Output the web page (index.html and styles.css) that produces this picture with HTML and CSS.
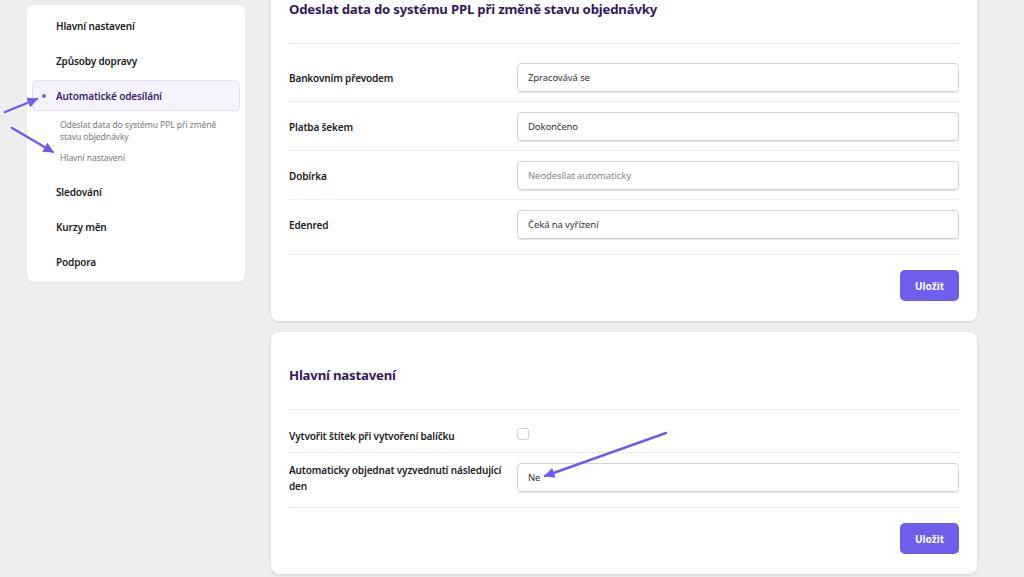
FILE: index.html
```html
<!DOCTYPE html>
<html lang="cs">
<head>
<meta charset="utf-8">
<title>PPL nastavení</title>
<link rel="stylesheet" href="styles.css">
</head>
<body>
<div class="page">
  <nav class="sidebar">
    <div class="nav-item">Hlavní nastavení</div>
    <div class="nav-item">Způsoby dopravy</div>
    <div class="nav-item active"><span class="dot"></span>Automatické odesílání</div>
    <div class="sub-list">
      <div class="sub-item">Odeslat data do systému PPL při změně stavu objednávky</div>
      <div class="sub-item">Hlavní nastavení</div>
    </div>
    <div class="nav-item">Sledování</div>
    <div class="nav-item">Kurzy měn</div>
    <div class="nav-item">Podpora</div>
  </nav>
  <main class="main">
    <section class="card">
      <header class="card-head"><h2>Odeslat data do systému PPL při změně stavu objednávky</h2></header>
      <div class="card-body">
        <div class="row"><div class="label">Bankovním převodem</div><div class="field"><div class="input">Zpracovává se</div></div></div>
        <div class="row"><div class="label">Platba šekem</div><div class="field"><div class="input">Dokončeno</div></div></div>
        <div class="row"><div class="label">Dobírka</div><div class="field"><div class="input placeholder">Neodesílat automaticky</div></div></div>
        <div class="row"><div class="label">Edenred</div><div class="field"><div class="input">Čeká na vyřízení</div></div></div>
      </div>
      <footer class="card-foot"><button class="btn">Uložit</button></footer>
    </section>
    <section class="card">
      <header class="card-head"><h2>Hlavní nastavení</h2></header>
      <div class="card-body">
        <div class="row row-check"><div class="label">Vytvořit štítek při vytvoření balíčku</div><div class="field"><span class="checkbox"></span></div></div>
        <div class="row"><div class="label">Automaticky objednat vyzvednutí následující den</div><div class="field"><div class="input">Ne</div></div></div>
      </div>
      <footer class="card-foot"><button class="btn">Uložit</button></footer>
    </section>
  </main>
</div>
<svg class="arrows" width="1024" height="577" viewBox="0 0 1024 577">
  <defs>
    <marker id="head" viewBox="0 0 10 10" refX="9" refY="5" markerWidth="4.4" markerHeight="4.4" orient="auto" markerUnits="strokeWidth">
      <path d="M0 0 L10 5 L0 10 Z" fill="#6e5cf2"/>
    </marker>
  </defs>
  <g stroke="#6e5cf2" stroke-width="2.4" stroke-linecap="round" fill="none" marker-end="url(#head)">
    <line x1="5" y1="112" x2="37" y2="99"/>
    <line x1="12" y1="128" x2="53" y2="152"/>
    <line x1="666" y1="433" x2="545" y2="476"/>
  </g>
</svg>
</body>
</html>
```

FILE: styles.css
```css
* { box-sizing: border-box; }
html, body { margin: 0; padding: 0; }
body {
  background: #eeeeee;
  font-family: "Noto Sans", "Liberation Sans", sans-serif;
  color: #222;
  width: 1024px;
  height: 577px;
  overflow: hidden;
  position: relative;
}
.page {
  display: flex;
  align-items: flex-start;
  gap: 26px;
  padding-left: 27px;
}
.sidebar {
  width: 218px;
  margin-top: 5px;
  background: #fff;
  border-radius: 6px;
  box-shadow: 0 1px 2px rgba(0,0,0,0.06);
  padding: 3px 0 3px;
  display: flex;
  flex-direction: column;
}
.nav-item {
  height: 31px;
  margin: 2px 5px;
  padding-left: 23px;
  display: flex;
  align-items: center;
  font-size: 10px;
  letter-spacing: -0.15px;
  font-weight: 600;
  color: #222;
  border: 1px solid transparent;
  border-radius: 5px;
  position: relative;
}
.nav-item.active {
  background: #f6f2ff;
  border-color: #e6ddfb;
  color: #3d1f70;
}
.dot {
  position: absolute;
  left: 9px;
  top: 13px;
  width: 4px;
  height: 4px;
  border-radius: 50%;
  background: #7a62ea;
}
.sub-list {
  padding: 6px 10px 10px 33px;
  display: flex;
  flex-direction: column;
  gap: 9px;
}
.sub-item {
  font-size: 8.6px;
  letter-spacing: -0.1px;
  line-height: 12px;
  color: #7a7a7a;
}
.main {
  width: 706px;
  margin-top: -34px;
  display: flex;
  flex-direction: column;
  gap: 11px;
}
.card {
  background: #fff;
  border-radius: 8px;
  box-shadow: 0 1px 3px rgba(0,0,0,0.12);
  padding: 0 18px;
}
.card-head {
  height: 78px;
  border-bottom: 1px solid #e9e9e9;
  display: flex;
  align-items: center;
  padding-top: 8px;
}
.card-head h2 {
  margin: 0;
  font-size: 13.2px;
  letter-spacing: -0.2px;
  font-weight: 700;
  color: #35195f;
  line-height: 20px;
}
.card-body {
  padding: 9px 0 6px;
  border-bottom: 1px solid #e9e9e9;
}
.row {
  display: flex;
  align-items: center;
  padding: 10px 0 9px;
}
.row + .row { border-top: 1px solid #ececec; }
.row-check { padding: 11px 0 10px; }
.label {
  width: 228px;
  padding-right: 6px;
  margin: -2px 0;
  font-size: 10px;
  letter-spacing: -0.15px;
  font-weight: 600;
  line-height: 16px;
  color: #222;
}
.field { flex: 1; display: flex; align-items: center; }
.input {
  width: 100%;
  height: 29px;
  border: 1px solid #d2d2d9;
  border-radius: 4px;
  box-shadow: 0 1px 1px rgba(0,0,0,0.1);
  padding: 0 10px;
  display: flex;
  align-items: center;
  font-size: 9.5px;
  letter-spacing: -0.1px;
  color: #333;
}
.input.placeholder { color: #888; }
.checkbox {
  width: 12px;
  height: 12px;
  border: 1px solid #cfcfd4;
  border-radius: 3px;
  background: #fff;
  margin-top: -4px;
}
.card-foot {
  display: flex;
  justify-content: flex-end;
  padding: 15px 0 20px;
}
.btn {
  width: 59px;
  height: 31px;
  border: none;
  border-radius: 5px;
  background: #6d5eeb;
  color: #fff;
  font-family: "Noto Sans", "Liberation Sans", sans-serif;
  font-size: 10px;
  font-weight: 700;
  padding: 0;
}
.arrows {
  position: absolute;
  left: 0;
  top: 0;
  pointer-events: none;
}
```
